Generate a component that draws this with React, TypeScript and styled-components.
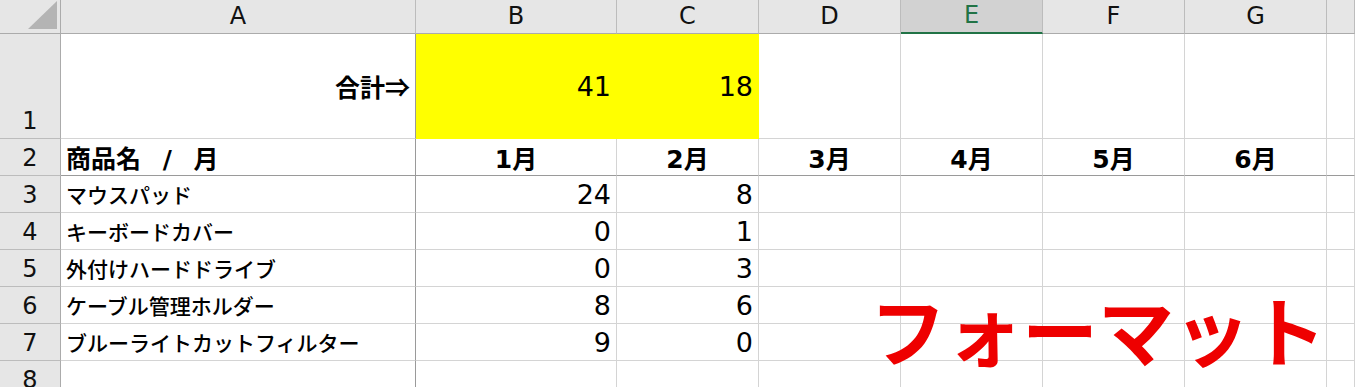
import styled, { createGlobalStyle, css } from "styled-components";

const GlobalStyle = createGlobalStyle`
  html,
  body {
    margin: 0;
    padding: 0;
    background: #ffffff;
  }
`;

const JP = `"Noto Sans CJK JP", "Noto Sans", sans-serif`;
const LATIN = `"DejaVu Sans", "Noto Sans CJK JP", sans-serif`;

const Sheet = styled.div`
  position: relative;
  display: grid;
  grid-template-columns: 61px 355px 201px 142px 142px 142px 142px 142px 1fr;
  grid-template-rows: 34px 105px repeat(7, 37px);
  width: 1355px;
  height: 387px;
  overflow: hidden;
  background: #ffffff;
`;

const Corner = styled.div`
  position: relative;
  box-sizing: border-box;
  background: #e6e6e6;
  border-right: 1px solid #ababab;
  border-bottom: 1px solid #ababab;

  &::after {
    content: "";
    position: absolute;
    right: 3px;
    bottom: 4px;
    width: 29px;
    height: 28px;
    background: #b4b4b4;
    clip-path: polygon(100% 0, 100% 100%, 0 100%);
  }
`;

const ColHeader = styled.div<{ $selected?: boolean }>`
  box-sizing: border-box;
  display: flex;
  align-items: center;
  justify-content: center;
  padding-bottom: 2px;
  background: #e6e6e6;
  border-right: 1px solid #bcbcbc;
  border-bottom: 1px solid #ababab;
  font-family: ${LATIN};
  font-size: 24px;
  color: #111111;

  ${(p) =>
    p.$selected &&
    css`
      background: #d2d2d2;
      color: #217346;
      border-bottom: 2px solid #217346;
    `}
`;

const RowHeader = styled.div`
  box-sizing: border-box;
  display: flex;
  align-items: flex-end;
  justify-content: center;
  background: #e6e6e6;
  border-right: 1px solid #ababab;
  border-bottom: 1px solid #bcbcbc;
  font-family: ${LATIN};
  font-size: 24px;
  line-height: 34px;
  color: #111111;
`;

type Align = "left" | "right" | "center";

const Cell = styled.div<{
  $align?: Align;
  $bold?: boolean;
  $num?: boolean;
  $kana?: boolean;
  $fill?: string;
  $edgeRight?: boolean;
  $edgeBottom?: boolean;
  $spread?: boolean;
}>`
  box-sizing: border-box;
  display: flex;
  align-items: center;
  justify-content: ${(p) =>
    p.$align === "right" ? "flex-end" : p.$align === "center" ? "center" : "flex-start"};
  padding: 0 5px;
  white-space: nowrap;
  color: #000000;
  background: ${(p) => p.$fill || "#ffffff"};
  border-right: 1px solid ${(p) => (p.$edgeRight ? "#9a9a9a" : p.$fill || "#d4d4d4")};
  border-bottom: 1px solid ${(p) => (p.$edgeBottom ? "#9a9a9a" : p.$fill || "#d4d4d4")};
  font-family: ${(p) => ((p.$num || p.$bold) && !p.$kana ? LATIN : JP)};
  font-size: ${(p) => (p.$bold ? "25px" : p.$num ? "27px" : "21px")};
  font-weight: ${(p) => (p.$bold ? 700 : 500)};
  word-spacing: ${(p) => (p.$spread ? "13px" : "normal")};
`;

// text box floating over the grid
const Stamp = styled.div`
  position: absolute;
  left: 870px;
  top: 290px;
  font-family: ${JP};
  font-size: 76px;
  font-weight: 700;
  line-height: 1;
  color: #ee0000;
  white-space: nowrap;
`;

const columns = ["A", "B", "C", "D", "E", "F", "G", ""];
const months = ["1月", "2月", "3月", "4月", "5月", "6月"];

const products: { name: string; jan: number; feb: number }[] = [
  { name: "マウスパッド", jan: 24, feb: 8 },
  { name: "キーボードカバー", jan: 0, feb: 1 },
  { name: "外付けハードドライブ", jan: 0, feb: 3 },
  { name: "ケーブル管理ホルダー", jan: 8, feb: 6 },
  { name: "ブルーライトカットフィルター", jan: 9, feb: 0 },
];

const blanks = (count: number, bottom?: boolean) =>
  Array.from({ length: count }, (_, i) => <Cell key={`b${i}`} $edgeBottom={bottom} />);

export default function App() {
  const total = (key: "jan" | "feb") => products.reduce((s, p) => s + p[key], 0);

  return (
    <>
      <GlobalStyle />
      <Sheet>
        <Corner />
        {columns.map((c, i) => (
          <ColHeader key={i} $selected={c === "E"}>
            {c}
          </ColHeader>
        ))}

        {/* row 1: totals */}
        <RowHeader>1</RowHeader>
        <Cell $align="right" $bold $kana $edgeRight>
          合計⇒
        </Cell>
        <Cell $align="right" $num $fill="#ffff00">
          {total("jan")}
        </Cell>
        <Cell $align="right" $num $fill="#ffff00">
          {total("feb")}
        </Cell>
        {blanks(5)}

        {/* row 2: month headings */}
        <RowHeader>2</RowHeader>
        <Cell $bold $edgeRight $edgeBottom $spread>
          商品名 / 月
        </Cell>
        {months.map((m) => (
          <Cell key={m} $align="center" $bold $edgeBottom>
            {m}
          </Cell>
        ))}
        <Cell $edgeBottom />

        {products.map((p, i) => (
          <Row key={p.name} index={i + 3} name={p.name} jan={p.jan} feb={p.feb} />
        ))}

        <RowHeader>8</RowHeader>
        <Cell $edgeRight />
        {blanks(7)}

        <Stamp>フォーマット</Stamp>
      </Sheet>
    </>
  );
}

function Row(props: { index: number; name: string; jan: number; feb: number }) {
  return (
    <>
      <RowHeader>{props.index}</RowHeader>
      <Cell $edgeRight>{props.name}</Cell>
      <Cell $align="right" $num>
        {props.jan}
      </Cell>
      <Cell $align="right" $num>
        {props.feb}
      </Cell>
      {blanks(5)}
    </>
  );
}
